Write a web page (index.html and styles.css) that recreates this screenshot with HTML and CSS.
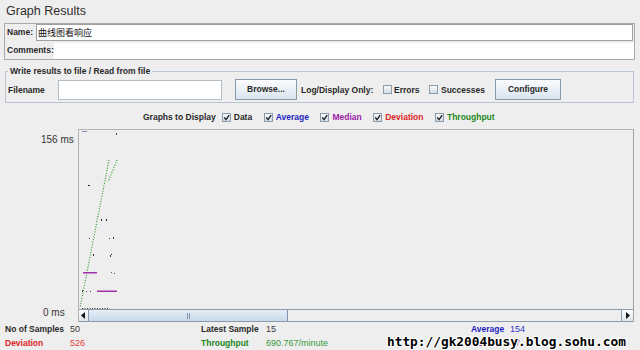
FILE: index.html
```html
<!DOCTYPE html>
<html lang="en">
<head>
<meta charset="utf-8">
<title>Graph Results</title>
<link rel="stylesheet" href="styles.css">
</head>
<body>
<div class="title">Graph Results</div>

<div class="namepanel">
  <div class="nrow">
    <span class="lbl name-l">Name:</span>
    <div class="namefield">曲线图看响应</div>
  </div>
  <div class="nrow crow">
    <span class="lbl com-l">Comments:</span>
    <div class="comments"></div>
  </div>
</div>

<fieldset class="fileset">
  <legend class="lbl">Write results to file / Read from file</legend>
  <div class="filerow">
    <span class="lbl fn">Filename</span>
    <div class="input"></div>
    <div class="btn browse">Browse...</div>
    <span class="lbl logonly">Log/Display Only:</span>
    <span class="cb"></span><span class="lbl errors">Errors</span>
    <span class="cb cb-succ"></span><span class="lbl succ">Successes</span>
    <div class="btn configure">Configure</div>
  </div>
</fieldset>

<div class="graphs">
  <span class="lbl gtd">Graphs to Display</span>
  <span class="opt"><span class="cb"><svg viewBox="0 0 7 7" width="7" height="7"><path d="M1.2 3.4 L3 5.6 L6.2 1.2" fill="none" stroke="#222" stroke-width="1.4"/></svg></span><span class="lbl">Data</span></span>
  <span class="opt"><span class="cb"><svg viewBox="0 0 7 7" width="7" height="7"><path d="M1.2 3.4 L3 5.6 L6.2 1.2" fill="none" stroke="#222" stroke-width="1.4"/></svg></span><span class="lbl c-avg">Average</span></span>
  <span class="opt"><span class="cb"><svg viewBox="0 0 7 7" width="7" height="7"><path d="M1.2 3.4 L3 5.6 L6.2 1.2" fill="none" stroke="#222" stroke-width="1.4"/></svg></span><span class="lbl c-med">Median</span></span>
  <span class="opt"><span class="cb"><svg viewBox="0 0 7 7" width="7" height="7"><path d="M1.2 3.4 L3 5.6 L6.2 1.2" fill="none" stroke="#222" stroke-width="1.4"/></svg></span><span class="lbl c-dev">Deviation</span></span>
  <span class="opt"><span class="cb"><svg viewBox="0 0 7 7" width="7" height="7"><path d="M1.2 3.4 L3 5.6 L6.2 1.2" fill="none" stroke="#222" stroke-width="1.4"/></svg></span><span class="lbl c-thr">Throughput</span></span>
</div>

<div class="graphwrap">
  <div class="axis">
    <span class="ax-top">156 ms</span>
    <span class="ax-bot">0 ms</span>
  </div>
  <div class="panel">
    <svg class="plot" width="554" height="179" viewBox="79 130 554 179">
      <line x1="82" y1="131.5" x2="87" y2="131.5" stroke="#8a80c8" stroke-width="1"/>
      <rect x="116" y="133" width="1" height="2" fill="#444"/>
      <line x1="109" y1="160" x2="80" y2="308" stroke="#2f9a2f" stroke-width="1.2" stroke-dasharray="1 1.6"/>
      <line x1="117" y1="160" x2="108" y2="182" stroke="#2f9a2f" stroke-width="1.2" stroke-dasharray="1 1.6"/>
      <rect x="88" y="185" width="2" height="1" fill="#222"/>
      <rect x="101" y="219" width="1" height="2" fill="#222"/>
      <rect x="106" y="219" width="1" height="2" fill="#222"/>
      <rect x="89" y="238" width="1" height="1" fill="#444"/>
      <rect x="109" y="238" width="1" height="1" fill="#444"/>
      <rect x="113" y="237" width="1" height="2" fill="#444"/>
      <rect x="93" y="254" width="1" height="2" fill="#333"/>
      <rect x="110" y="255" width="1" height="2" fill="#333"/>
      <rect x="111" y="254" width="1" height="1" fill="#333"/>
      <rect x="83" y="272" width="14" height="1.5" fill="#a030a8"/>
      <rect x="111" y="272" width="1" height="1" fill="#555"/>
      <rect x="114" y="273" width="1" height="1" fill="#555"/>
      <rect x="82" y="290" width="1" height="2" fill="#444"/>
      <rect x="86" y="291" width="1" height="1" fill="#444"/>
      <rect x="90" y="291" width="1" height="1" fill="#444"/>
      <rect x="97" y="290.5" width="20" height="1.5" fill="#a030a8"/>
      <line x1="82" y1="308.5" x2="108" y2="308.5" stroke="#333" stroke-width="1" stroke-dasharray="1 1.5"/>
    </svg>
    <div class="scroll">
      <div class="sbtn sleft"><svg width="5" height="7" viewBox="0 0 5 7"><path d="M4 0 L0 3.5 L4 7 Z" fill="#111"/></svg></div>
      <div class="thumb"><span class="grip"></span></div>
      <div class="track"></div>
      <div class="sbtn sright"><svg width="5" height="7" viewBox="0 0 5 7"><path d="M1 0 L5 3.5 L1 7 Z" fill="#111"/></svg></div>
    </div>
  </div>
</div>

<div class="stats">
  <span class="lbl">No of Samples</span><span class="val">50</span>
  <span class="lbl">Latest Sample</span><span class="val">15</span>
  <span class="lbl c-avg">Average</span><span class="val v-avg">154</span>
  <span class="lbl c-dev">Deviation</span><span class="val v-dev">526</span>
  <span class="lbl c-thr">Throughput</span><span class="val v-thr">690.767/minute</span>
  <span class="lbl c-med">Median</span><span class="val v-med">47</span>
</div>

<div class="watermark">http://gk2004busy.blog.sohu.com</div>
</body>
</html>
```

FILE: styles.css
```css
* { box-sizing: border-box; }

body {
  margin: 0;
  width: 640px;
  height: 350px;
  overflow: hidden;
  position: relative;
  background: #eeeeee;
  font-family: "Liberation Sans", Arial, sans-serif;
  color: #333;
}

.lbl {
  font-size: 8.5px;
  font-weight: bold;
  color: #2a2a2a;
  white-space: nowrap;
}

.title {
  height: 23px;
  line-height: 23px;
  padding-left: 6px;
  font-size: 12.5px;
  color: #2e2e2e;
}

/* name / comments */
.namepanel {
  margin-left: 4px;
  width: 631px;
  border: 1px solid #a9a9a9;
}
.nrow {
  display: flex;
  align-items: flex-start;
  height: 18px;
  padding-left: 2px;
}
.crow { height: 17px; }
.name-l { width: 29px; line-height: 17px; }
.com-l { width: 47px; line-height: 17px; }
.namefield {
  flex: 1;
  height: 17px;
  margin-right: 1px;
  border: 1px solid #a0a0a0;
  background: #fff;
  padding-left: 1px;
  font-family: "Noto Sans CJK SC", sans-serif;
  font-size: 9px;
  line-height: 15px;
  color: #111;
}
.comments {
  flex: 1;
  height: 16px;
  margin-top: 1px;
  background: #fff;
}

/* file fieldset */
.fileset {
  margin: 6px 0 0 5px;
  width: 629px;
  min-width: 0;
  padding: 0 0 2px 2px;
  border: 1px solid #b9c5d1;
}
.fileset legend {
  margin: 0;
  padding: 0 2px;
  line-height: 10px;
}
.filerow {
  display: flex;
  align-items: center;
  height: 21px;
  margin-top: 3px;
}
.fn { width: 50px; }
.input {
  width: 164px;
  height: 20px;
  background: #fff;
  border: 1px solid #b4bcc6;
}
.btn {
  height: 21px;
  line-height: 19px;
  text-align: center;
  font-size: 8.5px;
  font-weight: bold;
  color: #2a2a2a;
  border: 1px solid #8b9aab;
  background: linear-gradient(#fbfcfe, #d9e4ef);
}
.browse { width: 62px; margin-left: 13px; }
.logonly { margin-left: 4px; width: 81px; }
.errors { margin-left: 2px; width: 34px; }
.succ { margin-left: 3px; width: 54px; }
.configure { width: 66px; }

.cb {
  display: inline-flex;
  align-items: center;
  justify-content: center;
  width: 9px;
  height: 9px;
  margin-left: 1px;
  border: 1px solid #8d9cab;
  background: linear-gradient(#f7f9fb, #d5dee8);
  flex: none;
}

/* graphs to display */
.graphs {
  display: flex;
  align-items: center;
  gap: 11.5px;
  height: 12px;
  margin-top: 8px;
  padding-left: 143px;
}
.gtd { margin-right: -5.5px; }
.opt {
  display: flex;
  align-items: center;
  gap: 3px;
}
.opt .cb { margin-left: 0; }

.c-avg { color: #1f1fbf; }
.c-med { color: #9a1aa6; }
.c-dev { color: #e02424; }
.c-thr { color: #1d871d; }

/* graph */
.graphwrap {
  display: flex;
  height: 193px;
  margin-top: 6px;
}
.axis {
  width: 78px;
  display: flex;
  flex-direction: column;
  justify-content: space-between;
  padding: 5px 0 3px 41px;
  font-size: 10px;
  line-height: 12px;
  color: #333;
}
.ax-bot { margin-left: 2px; }
.panel {
  width: 556px;
  display: flex;
  flex-direction: column;
  border-top: 1px solid #b3b3b3;
  border-left: 1px solid #b3b3b3;
  border-right: 1px solid #a2a2a2;
}
.plot { display: block; }
.scroll {
  display: flex;
  height: 13px;
  border-top: 1px solid #8c9aa9;
  border-bottom: 1px solid #8c9aa9;
  background: #eeeeee;
}
.sbtn {
  display: flex;
  align-items: center;
  justify-content: center;
  background: linear-gradient(#fdfdfe, #dfe5ec);
}
.sleft { width: 10px; border-right: 1px solid #8c9aa9; }
.sright { width: 12px; border-left: 1px solid #8c9aa9; }
.thumb {
  width: 199px;
  display: flex;
  align-items: center;
  justify-content: center;
  border-right: 1px solid #7f95ad;
  background: linear-gradient(#e6eef7, #c8d9ea);
}
.grip {
  width: 3px;
  height: 6px;
  border-left: 1px solid #7f95ad;
  border-right: 1px solid #7f95ad;
}
.track { flex: 1; }

/* stats */
.stats {
  display: grid;
  grid-template-columns: 65px 131px 65px 205px 39px 1fr;
  grid-auto-rows: 14px;
  align-items: center;
  padding-left: 5px;
}
.val { font-size: 9px; color: #3a3a3a; }
.v-avg { color: #3535c8; }
.v-dev { color: #e23a3a; }
.v-thr { color: #3a9a3a; }
.v-med { color: #a83ab0; }

/* watermark stamped over the bottom-right corner of the screenshot */
.watermark {
  position: absolute;
  left: 387px;
  top: 335px;
  font-family: "DejaVu Sans Mono", monospace;
  font-size: 12.8px;
  font-weight: bold;
  line-height: 14px;
  color: #000;
  text-shadow: 1px 0 #fff, -1px 0 #fff, 0 1px #fff, 0 -1px #fff,
               1px 1px #fff, -1px -1px #fff, 1px -1px #fff, -1px 1px #fff;
  white-space: nowrap;
}
```
